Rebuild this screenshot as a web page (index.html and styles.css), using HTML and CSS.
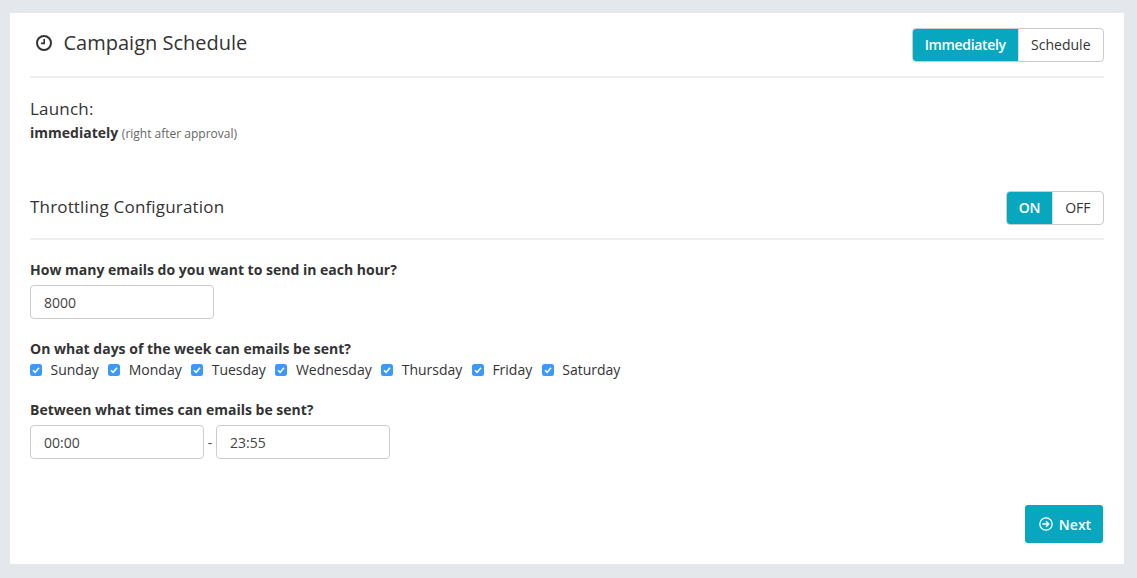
FILE: index.html
```html
<!DOCTYPE html>
<html lang="en">
<head>
<meta charset="utf-8">
<title>Campaign Schedule</title>
<link rel="stylesheet" href="styles.css">
</head>
<body>
<main class="card">
  <header class="section-head head-main">
    <h1 class="title">
      <svg class="clock" viewBox="0 0 16 16" width="16" height="16" aria-hidden="true"><circle cx="8" cy="8" r="7" fill="none" stroke="#333" stroke-width="2"/><path d="M8.2 4v4.4H5" fill="none" stroke="#333" stroke-width="1.6"/></svg>
      Campaign Schedule
    </h1>
    <div class="toggle">
      <span class="toggle-btn active">Immediately</span>
      <span class="toggle-btn">Schedule</span>
    </div>
  </header>
  <section class="launch">
    <div class="launch-label">Launch:</div>
    <div class="launch-value"><b>immediately</b> <small>(right after approval)</small></div>
  </section>
  <header class="section-head head-throttle">
    <h2 class="subtitle">Throttling Configuration</h2>
    <div class="toggle">
      <span class="toggle-btn active">ON</span>
      <span class="toggle-btn">OFF</span>
    </div>
  </header>
  <section class="field field-hour">
    <label class="field-label">How many emails do you want to send in each hour?</label>
    <input class="text-input w-hour" type="text" value="8000">
  </section>
  <section class="field field-days">
    <div class="field-label">On what days of the week can emails be sent?</div>
    <div class="days">
      <span class="day"><svg class="check" viewBox="0 0 12 12"><rect width="12" height="12" rx="2.5" fill="#3b99fc"/><path d="M3 6.2l2.1 2.2L9 3.8" fill="none" stroke="#fff" stroke-width="1.6"/></svg>Sunday</span>
      <span class="day"><svg class="check" viewBox="0 0 12 12"><rect width="12" height="12" rx="2.5" fill="#3b99fc"/><path d="M3 6.2l2.1 2.2L9 3.8" fill="none" stroke="#fff" stroke-width="1.6"/></svg>Monday</span>
      <span class="day"><svg class="check" viewBox="0 0 12 12"><rect width="12" height="12" rx="2.5" fill="#3b99fc"/><path d="M3 6.2l2.1 2.2L9 3.8" fill="none" stroke="#fff" stroke-width="1.6"/></svg>Tuesday</span>
      <span class="day"><svg class="check" viewBox="0 0 12 12"><rect width="12" height="12" rx="2.5" fill="#3b99fc"/><path d="M3 6.2l2.1 2.2L9 3.8" fill="none" stroke="#fff" stroke-width="1.6"/></svg>Wednesday</span>
      <span class="day"><svg class="check" viewBox="0 0 12 12"><rect width="12" height="12" rx="2.5" fill="#3b99fc"/><path d="M3 6.2l2.1 2.2L9 3.8" fill="none" stroke="#fff" stroke-width="1.6"/></svg>Thursday</span>
      <span class="day"><svg class="check" viewBox="0 0 12 12"><rect width="12" height="12" rx="2.5" fill="#3b99fc"/><path d="M3 6.2l2.1 2.2L9 3.8" fill="none" stroke="#fff" stroke-width="1.6"/></svg>Friday</span>
      <span class="day"><svg class="check" viewBox="0 0 12 12"><rect width="12" height="12" rx="2.5" fill="#3b99fc"/><path d="M3 6.2l2.1 2.2L9 3.8" fill="none" stroke="#fff" stroke-width="1.6"/></svg>Saturday</span>
    </div>
  </section>
  <section class="field field-times">
    <div class="field-label">Between what times can emails be sent?</div>
    <div class="times">
      <input class="text-input w-from" type="text" value="00:00">
      <span class="dash">-</span>
      <input class="text-input w-to" type="text" value="23:55">
    </div>
  </section>
  <footer class="actions">
    <button class="next" type="button">
      <svg viewBox="0 0 14 14" width="14" height="14" aria-hidden="true"><circle cx="7" cy="7" r="6.2" fill="none" stroke="#fff" stroke-width="1.3"/><path d="M3.4 7h6.4M7 4.2L9.9 7 7 9.8" fill="none" stroke="#fff" stroke-width="1.3"/></svg>
      Next
    </button>
  </footer>
</main>
</body>
</html>
```

FILE: styles.css
```css
* { box-sizing: border-box; }
html, body { height: 100%; }
body {
  margin: 0;
  padding: 13px 13px 14px 10px;
  background: #e4e8ec;
  font-family: "Open Sans", sans-serif;
  font-size: 14px;
  color: #333;
  overflow: hidden;
}
.card {
  background: #fff;
  height: 551px;
  padding: 15px 20px 0;
  display: flex;
  flex-direction: column;
}
.section-head {
  display: flex;
  justify-content: space-between;
  align-items: center;
  border-bottom: 2px solid #eeeeee;
}
.head-main { height: 50px; padding-bottom: 14px; }
.head-throttle { height: 49px; margin-top: 44px; padding-bottom: 14px; }
.title {
  margin: 0 0 4px;
  padding-left: 6px;
  display: flex;
  align-items: center;
  gap: 11.5px;
  font-size: 20px;
  font-weight: 400;
  line-height: 28px;
}
.clock { width: 16px; height: 16px; }
.subtitle {
  margin: 0 0 2px;
  font-size: 17px;
  font-weight: 400;
  letter-spacing: 0.17px;
}
.toggle {
  display: flex;
  height: 34px;
  border: 1px solid #ccc;
  border-radius: 4px;
  overflow: hidden;
}
.toggle-btn {
  padding: 0 12.5px;
  line-height: 32px;
  font-size: 14px;
  border-left: 1px solid #ddd;
}
.toggle-btn:first-child { border-left: 0; }
.toggle-btn.active {
  padding: 0 12px;
  background: #07a7bf;
  color: #fff;
  font-weight: 600;
  letter-spacing: -0.35px;
}
.head-throttle .toggle-btn.active { padding-right: 11.5px; }
.launch { margin-top: 20px; }
.launch-label { font-size: 17px; line-height: 22px; letter-spacing: 0.2px; }
.launch-value { font-size: 14px; line-height: 26px; }
.launch-value b { font-weight: 700; }
.launch-value small { font-size: 12px; color: #666; }
.field-label {
  display: block;
  font-weight: 700;
  font-size: 14px;
  line-height: 20px;
}
.field-hour { margin-top: 20px; }
.field-days { margin-top: 20px; }
.field-times { margin-top: 20px; }
.text-input {
  display: block;
  height: 34px;
  margin-top: 5px;
  padding: 0 13px;
  border: 1px solid #ccc;
  border-radius: 4px;
  font: 14px "Open Sans", sans-serif;
  color: #444;
  background: #fff;
}
.w-hour { width: 184px; }
.w-from { width: 174px; }
.w-to { width: 174px; }
.times { display: flex; align-items: flex-end; }
.dash { width: 12px; text-align: center; line-height: 32px; color: #555; }
.days { display: flex; gap: 9.5px; line-height: 21px; }
.day { display: flex; align-items: center; gap: 8.5px; }
.check { width: 12px; height: 12px; }
.actions {
  margin-top: 46px;
  padding-right: 1px;
  display: flex;
  justify-content: flex-end;
}
.next {
  width: 78px;
  height: 38px;
  padding: 0 0 0 2px;
  display: flex;
  align-items: center;
  justify-content: center;
  gap: 6px;
  background: #07a7bf;
  color: #fff;
  border: 0;
  border-radius: 3px;
  font: 600 14px "Open Sans", sans-serif;
}
```
